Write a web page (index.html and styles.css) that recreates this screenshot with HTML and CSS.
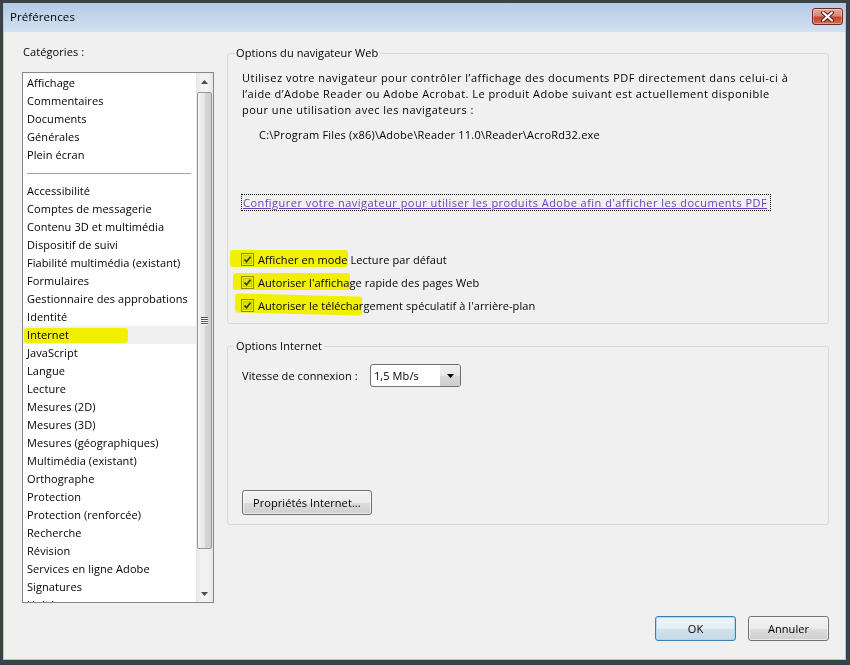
FILE: index.html
```html
<!DOCTYPE html>
<html lang="fr">
<head>
    <meta charset="UTF-8">
    <title>Préférences</title>
    <link rel="stylesheet" href="styles.css">
</head>
<body>
<div class="window">
    <div class="frame">
        <div class="titlebar">
            <span class="title">Préférences</span>
            <button class="close">
                <svg width="15" height="11" viewBox="0 0 15 11">
                    <path d="M3 1.5 L12 9.5 M12 1.5 L3 9.5" stroke="#4a1a12" stroke-width="4" stroke-linecap="round"/>
                    <path d="M3 1.5 L12 9.5 M12 1.5 L3 9.5" stroke="#ffffff" stroke-width="2.2" stroke-linecap="round"/>
                </svg>
            </button>
        </div>

        <div class="body">
            <div class="panes">
                <div class="left">
                    <div class="label">Catégories :</div>
                    <div class="listbox">
                        <ul class="items">
                            <li>Affichage</li>
                            <li>Commentaires</li>
                            <li>Documents</li>
                            <li>Générales</li>
                            <li>Plein écran</li>
                            <li class="sep"></li>
                            <li>Accessibilité</li>
                            <li>Comptes de messagerie</li>
                            <li>Contenu 3D et multimédia</li>
                            <li>Dispositif de suivi</li>
                            <li>Fiabilité multimédia (existant)</li>
                            <li>Formulaires</li>
                            <li>Gestionnaire des approbations</li>
                            <li>Identité</li>
                            <li class="selected"><span class="marker mark-internet"></span>Internet</li>
                            <li>JavaScript</li>
                            <li>Langue</li>
                            <li>Lecture</li>
                            <li>Mesures (2D)</li>
                            <li>Mesures (3D)</li>
                            <li>Mesures (géographiques)</li>
                            <li>Multimédia (existant)</li>
                            <li>Orthographe</li>
                            <li>Protection</li>
                            <li>Protection (renforcée)</li>
                            <li>Recherche</li>
                            <li>Révision</li>
                            <li>Services en ligne Adobe</li>
                            <li>Signatures</li>
                            <li>Unités</li>
                        </ul>
                        <div class="scrollbar">
                            <div class="sb-btn">
                                <svg width="7" height="4" viewBox="0 0 7 4"><path d="M0 4 L3.5 0 L7 4 Z" fill="#4d4d4d"/></svg>
                            </div>
                            <div class="thumb">
                                <svg width="7" height="8" viewBox="0 0 7 8">
                                    <path d="M0 0.5 H7 M0 2.5 H7 M0 4.5 H7 M0 6.5 H7" stroke="#555" stroke-width="1"/>
                                    <path d="M0 1.5 H7 M0 3.5 H7 M0 5.5 H7 M0 7.5 H7" stroke="#fff" stroke-width="1"/>
                                </svg>
                            </div>
                            <div class="track"></div>
                            <div class="sb-btn">
                                <svg width="7" height="4" viewBox="0 0 7 4"><path d="M0 0 L3.5 4 L7 0 Z" fill="#4d4d4d"/></svg>
                            </div>
                        </div>
                    </div>
                </div>

                <div class="right">
                    <fieldset class="group web">
                        <legend>Options du navigateur Web</legend>
                        <p class="intro">Utilisez votre navigateur pour contrôler l’affichage des documents PDF directement dans celui-ci à<br>l’aide d’Adobe Reader ou Adobe Acrobat. Le produit Adobe suivant est actuellement disponible<br>pour une utilisation avec les navigateurs :</p>
                        <p class="path">C:\Program Files (x86)\Adobe\Reader 11.0\Reader\AcroRd32.exe</p>
                        <a class="link" href="#">Configurer votre navigateur pour utiliser les produits Adobe afin d'afficher les documents PDF</a>
                        <div class="checks">
                            <label class="check"><span class="marker mark-1"></span><span class="box"><svg width="13" height="13" viewBox="0 0 13 13"><rect x="0.5" y="0.5" width="12" height="12" fill="#f4f4f4" stroke="#8e8f8f"/><rect x="2.5" y="2.5" width="8" height="8" fill="#e2e2e2" stroke="#c9c9c9"/><path d="M3.5 6.5 L5.5 8.7 L9.5 3.8" fill="none" stroke="#2f3d5c" stroke-width="1.7"/></svg></span>Afficher en mode Lecture par défaut</label>
                            <label class="check"><span class="marker mark-2"></span><span class="box"><svg width="13" height="13" viewBox="0 0 13 13"><rect x="0.5" y="0.5" width="12" height="12" fill="#f4f4f4" stroke="#8e8f8f"/><rect x="2.5" y="2.5" width="8" height="8" fill="#e2e2e2" stroke="#c9c9c9"/><path d="M3.5 6.5 L5.5 8.7 L9.5 3.8" fill="none" stroke="#2f3d5c" stroke-width="1.7"/></svg></span>Autoriser l'affichage rapide des pages Web</label>
                            <label class="check"><span class="marker mark-3"></span><span class="box"><svg width="13" height="13" viewBox="0 0 13 13"><rect x="0.5" y="0.5" width="12" height="12" fill="#f4f4f4" stroke="#8e8f8f"/><rect x="2.5" y="2.5" width="8" height="8" fill="#e2e2e2" stroke="#c9c9c9"/><path d="M3.5 6.5 L5.5 8.7 L9.5 3.8" fill="none" stroke="#2f3d5c" stroke-width="1.7"/></svg></span>Autoriser le téléchargement spéculatif à l'arrière-plan</label>
                        </div>
                    </fieldset>

                    <fieldset class="group net">
                        <legend>Options Internet</legend>
                        <div class="speed">
                            <span class="speed-label">Vitesse de connexion :</span>
                            <div class="combo">
                                <span class="combo-text">1,5 Mb/s</span>
                                <span class="drop"><svg width="7" height="4" viewBox="0 0 7 4"><path d="M0 0 L3.5 4 L7 0 Z" fill="#000"/></svg></span>
                            </div>
                        </div>
                        <button class="btn props">Propriétés Internet...</button>
                    </fieldset>
                </div>
            </div>

            <div class="footer">
                <button class="btn default">OK</button>
                <button class="btn">Annuler</button>
            </div>
        </div>
    </div>
</div>
</body>
</html>
```

FILE: styles.css
```css
body {
    margin: 0;
    font-family: "Open Sans", "Noto Sans", sans-serif;
    font-size: 11px;
    letter-spacing: 0.08px;
    color: #000;
}

.window {
    width: 850px;
    height: 665px;
    box-sizing: border-box;
    padding: 3px 4px 5px 3px;
    background: #3c4146;
}

.frame {
    height: 100%;
    box-sizing: border-box;
    border: 1px solid #a6c8e4;
    border-top: none;
    display: flex;
    flex-direction: column;
    background: #f0f0f0;
}

.titlebar {
    height: 29px;
    flex-shrink: 0;
    display: flex;
    justify-content: space-between;
    align-items: flex-start;
    background: linear-gradient(#b3cbe6, #d3e1f0);
    padding: 0 2px 0 6px;
}

.title {
    line-height: 28px;
    font-size: 11.5px;
}

.close {
    margin-top: 5px;
    width: 31px;
    height: 17px;
    padding: 0;
    border: 1px solid #6e2c22;
    border-radius: 3px;
    background: linear-gradient(#e7aa9e 0%, #d98877 45%, #c5452e 55%, #d4694f 100%);
    box-shadow: inset 0 0 0 1px rgba(255, 255, 255, 0.35);
    display: flex;
    align-items: center;
    justify-content: center;
}

.body {
    flex: 1;
    display: flex;
    flex-direction: column;
}

.panes {
    display: flex;
    gap: 13px;
    padding: 0 16px 0 18px;
}

/* left column */
.left {
    width: 192px;
    flex-shrink: 0;
}

.label {
    margin-top: 12px;
    line-height: 16px;
    padding-left: 1px;
}

.listbox {
    margin-top: 12px;
    height: 531px;
    box-sizing: border-box;
    border: 1px solid #828790;
    background: #fff;
    display: flex;
}

.items {
    flex: 1;
    margin: 0;
    padding: 1px 0 0;
    list-style: none;
    overflow: hidden;
}

.items li {
    position: relative;
    height: 18px;
    line-height: 18px;
    padding-left: 4px;
    white-space: nowrap;
}

.items li.sep {
    background: linear-gradient(#6fb0dc, #6fb0dc) no-repeat 4px 9px / 164px 1px;
}

.items li.selected {
    background: #f0f0f0;
}

.marker {
    position: absolute;
    background: #ffff00;
    mix-blend-mode: multiply;
    border-radius: 3px;
    filter: blur(0.6px);
}

.mark-internet {
    left: 1px;
    top: 2px;
    width: 104px;
    height: 15px;
}

.scrollbar {
    width: 17px;
    flex-shrink: 0;
    display: flex;
    flex-direction: column;
    background: linear-gradient(to right, #e6e6e6, #f2f2f2 30%, #f2f2f2 70%, #e6e6e6);
}

.sb-btn {
    height: 17px;
    display: flex;
    align-items: center;
    justify-content: center;
    flex-shrink: 0;
}

.thumb {
    margin: 2px 1px 0;
    height: 457px;
    box-sizing: border-box;
    border: 1px solid #979797;
    border-radius: 2px;
    background: linear-gradient(to right, #f4f4f4, #e6e6e6 50%, #d6d6d6 51%, #cfcfcf);
    display: flex;
    align-items: center;
    justify-content: center;
}

.track {
    flex: 1;
}

/* right column */
.right {
    flex: 1;
}

.group {
    margin: 0;
    border: 1px solid #d5d9dc;
    border-radius: 3px;
    padding: 9px 14px 10px;
}

.group legend {
    margin-left: -8px;
    padding: 0 2px;
    line-height: 16px;
}

.web {
    margin-top: 13px;
}

.net {
    margin-top: 14px;
    padding-top: 10px;
    padding-bottom: 9px;
}

.intro {
    margin: 0;
    line-height: 16px;
    letter-spacing: 0.47px;
    white-space: nowrap;
}

.path {
    margin: 9px 0 0 17px;
    line-height: 16px;
    letter-spacing: 0.2px;
}

.link {
    display: inline-block;
    margin: 51px 0 0 -1px;
    padding: 0 3px 0 1px;
    line-height: 15px;
    border: 1px dotted #000;
    color: #6b3fb5;
    letter-spacing: 0.47px;
    white-space: nowrap;
}

.checks {
    margin-top: 40px;
    display: flex;
    flex-direction: column;
    gap: 7px;
}

.check {
    position: relative;
    display: flex;
    align-items: center;
    gap: 4px;
    height: 16px;
    margin-left: -1px;
}

.box {
    display: flex;
}

.mark-1 {
    left: -11px;
    top: -1px;
    width: 118px;
    height: 17px;
}

.mark-2 {
    left: -8px;
    top: -1px;
    width: 117px;
    height: 17px;
}

.mark-3 {
    left: -6px;
    top: -2px;
    width: 127px;
    height: 19px;
    transform: rotate(1.5deg);
}

.speed {
    display: flex;
    align-items: center;
}

.speed-label {
    width: 128px;
}

.combo {
    width: 91px;
    height: 23px;
    box-sizing: border-box;
    border: 1px solid #707070;
    border-radius: 3px;
    background: #fff;
    display: flex;
    align-items: center;
    overflow: hidden;
}

.combo-text {
    padding-left: 3px;
    flex: 1;
}

.drop {
    width: 20px;
    height: 100%;
    display: flex;
    align-items: center;
    justify-content: center;
    background: linear-gradient(#f2f2f2, #e6e6e6 50%, #d9d9d9 51%, #cdcdcd);
}

.btn {
    height: 25px;
    box-sizing: border-box;
    border: 1px solid #707070;
    border-radius: 3px;
    background: linear-gradient(#f2f2f2 0%, #ebebeb 50%, #dddddd 51%, #cfcfcf 100%);
    box-shadow: inset 0 0 0 1px rgba(255, 255, 255, 0.6);
    font-family: inherit;
    font-size: 11px;
    letter-spacing: 0.08px;
    color: #000;
    padding: 0 10px;
}

.props {
    display: block;
    margin-top: 103px;
}

.footer {
    display: flex;
    justify-content: flex-end;
    gap: 12px;
    margin-top: 13px;
    padding: 0 16px 0 0;
}

.footer .btn {
    width: 81px;
}

.btn.default {
    border-color: #3c7fb1;
    box-shadow: inset 0 0 0 1px #a6dcf6;
    background: linear-gradient(#eef6fb 0%, #e4eef5 50%, #d3e2ec 51%, #c6d8e4 100%);
}
```
